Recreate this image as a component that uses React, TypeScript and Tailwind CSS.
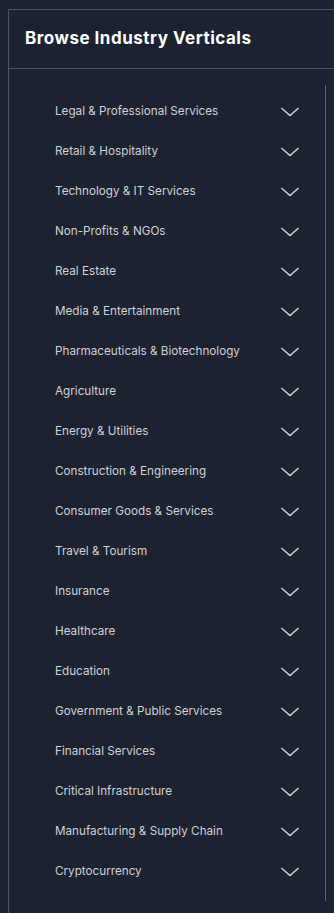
const industries = [
  'Legal & Professional Services',
  'Retail & Hospitality',
  'Technology & IT Services',
  'Non-Profits & NGOs',
  'Real Estate',
  'Media & Entertainment',
  'Pharmaceuticals & Biotechnology',
  'Agriculture',
  'Energy & Utilities',
  'Construction & Engineering',
  'Consumer Goods & Services',
  'Travel & Tourism',
  'Insurance',
  'Healthcare',
  'Education',
  'Government & Public Services',
  'Financial Services',
  'Critical Infrastructure',
  'Manufacturing & Supply Chain',
  'Cryptocurrency',
];

function Chevron() {
  return (
    <svg className="w-[18px] h-[10px] text-gray-300" viewBox="0 0 18 10" fill="none" stroke="currentColor">
      <path d="M1 1.5l8 7 8-7" strokeWidth={1.4} strokeLinecap="square" />
    </svg>
  );
}

export default function App() {
  return (
    <div
      className="min-h-[913px] w-[334px] bg-[#1c2230] pt-[9px] pl-[8px] overflow-hidden"
      style={{ fontFamily: 'Inter, "Noto Sans", sans-serif' }}
    >
      <div className="border-l border-t border-[#4b5262] w-[340px] min-h-[904px]">
        {/* Header */}
        <div className="h-[59px] flex items-center pl-[16px] border-b border-[#4b5262]">
          <h2 className="text-[17px] font-bold text-white tracking-[0.5px]">Browse Industry Verticals</h2>
        </div>

        {/* List */}
        <div className="ml-[24px] mt-[16px] w-[293px] border-r border-[#5f6676] pt-[7px] pb-[9px]">
          {industries.map((name) => (
            <button
              key={name}
              className="w-full h-[40px] flex items-center justify-between pl-[22px] pr-[26px] text-left"
            >
              <span className="text-[11.7px] text-[#cfd2d8]">{name}</span>
              <Chevron />
            </button>
          ))}
        </div>
      </div>
    </div>
  );
}
